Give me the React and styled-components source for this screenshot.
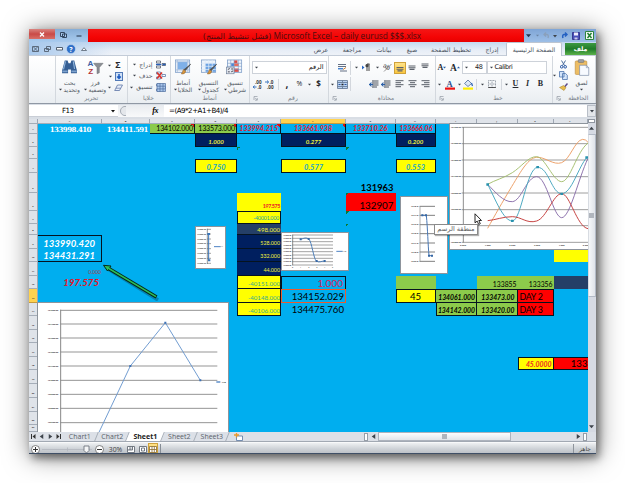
import React from 'react';
import styled, { createGlobalStyle, css } from 'styled-components';

const Global = createGlobalStyle`
  * { box-sizing: border-box; }
  body { margin: 0; background: #fff; overflow: hidden; }
`;

const ui = '"Open Sans", "DejaVu Sans", sans-serif';
const arabic = '"DejaVu Sans", "Noto Sans", sans-serif';

const Page = styled.div`
  width: 625px;
  height: 483px;
  padding: 29px;
  background: #fff;
  overflow: hidden;
`;

const Window = styled.main`
  width: 567px;
  height: 425px;
  display: flex;
  flex-direction: column;
  background: #d5dae2;
  box-shadow: 3px 4px 8px rgba(0, 0, 0, 0.45), 1px 2px 24px rgba(0, 0, 0, 0.5);
  border-bottom: 1px solid #3f4f66;
  font-family: ${ui};
  overflow: hidden;
`;

/* Title bar */
const TitleBar = styled.header`
  height: 13px;
  display: flex;
  flex: none;
  background: #a9c7ea;
`;
const WindowButtons = styled.div`
  width: 59px;
  display: flex;
  background: linear-gradient(#86add6, #a9cbee);
`;
const CloseButton = styled.div`
  width: 26px;
  height: 10px;
  display: flex;
  align-items: center;
  justify-content: center;
  background: linear-gradient(#d98480, #c94a47 50%, #d86f68);
`;
const WindowButton = styled.div`
  width: 16px;
  height: 11px;
  display: flex;
  align-items: center;
  justify-content: center;
`;
const Title = styled.h1`
  width: 436px;
  margin: 0;
  padding-left: 12px;
  background: linear-gradient(#f51616, #f40505 60%, #e80000);
  color: #4a0d10;
  font: 400 8.3px/14px ${ui};
  text-align: center;
  white-space: nowrap;
`;
const TitleArabic = styled.span`
  font: 400 7.9px/13px ${arabic};
`;
const QuickAccess = styled.div`
  width: 72px;
  display: flex;
  align-items: center;
  background: linear-gradient(#7fa5d6, #9dbfe7);
`;

/* Ribbon tabs */
const TabBar = styled.nav`
  height: 14px;
  flex: none;
  display: flex;
  background: linear-gradient(#c4d9f0, #e6edf6 60%, #eef2f8);
  border-bottom: 1px solid #c3ccd8;
`;
const TabTools = styled.div`
  width: 277px;
  flex: none;
  display: flex;
  align-items: center;
  background: linear-gradient(90deg, #a9c9ec, rgba(196, 217, 240, 0) 30%);
`;
const Tab = styled.div`
  width: ${p => p.$w}px;
  flex: none;
  height: 14px;
  font: 400 6.2px/15px ${arabic};
  color: #4a525e;
  text-align: center;
  white-space: nowrap;
  direction: rtl;
  ${p => p.$active && css`
    background: #fff;
    border: 1px solid #bcc5d1;
    border-bottom: 0;
    border-radius: 2px 2px 0 0;
    line-height: 13px;
  `}
  ${p => p.$file && css`
    margin: 1px 0 0 3px;
    height: 12px;
    line-height: 12px;
    color: #fff;
    font-weight: 700;
    background: linear-gradient(#3d9a42, #1f7b2a 50%, #5cb249);
  `}
`;

/* Ribbon */
const Ribbon = styled.section`
  height: 48px;
  flex: none;
  display: flex;
  background: linear-gradient(#fff, #f5f7f9 60%, #e9edf1);
  border-bottom: 1px solid #8f98a4;
`;
const Group = styled.div`
  width: ${p => p.$w}px;
  height: 47px;
  display: flex;
  flex-direction: column;
  border-right: 1px solid #d3d8de;
`;
const GroupBody = styled.div`
  height: 37px;
  display: flex;
  flex-direction: ${p => (p.$rows ? 'column' : 'row')};
  padding-top: 3px;
`;
const GroupLabel = styled.div`
  height: 10px;
  display: flex;
  align-items: center;
  justify-content: center;
  gap: 4px;
  font: 400 6px/10px ${arabic};
  color: #767d88;
  white-space: nowrap;
  padding: 0 3px;
`;
const LabelText = styled.span`
  flex: 1;
  text-align: center;
`;
const ToolRow = styled.div`
  height: ${p => p.$h || 16}px;
  display: flex;
  align-items: center;
`;
const Slot = styled.div`
  width: ${p => p.$w}px;
  height: 12px;
  flex: none;
  display: flex;
  align-items: center;
  justify-content: center;
  font: ${p => (p.$italic ? 'italic' : 'normal')} ${p => (p.$bold ? 700 : 400)} ${p => p.$size || 8}px/12px ${p => (p.$serif ? '"Liberation Serif", serif' : ui)};
  text-decoration: ${p => (p.$underline ? 'underline' : 'none')};
  color: #26292e;
  background: ${p => (p.$on ? 'linear-gradient(#ffe38a, #fbc73e)' : 'none')};
  border: ${p => (p.$on ? '1px solid #d0a23c' : '0')};
`;
const Combo = styled.div`
  width: ${p => p.$w}px;
  height: 12.5px;
  flex: none;
  display: flex;
  align-items: center;
  gap: 2px;
  padding: 0 2px;
  background: #fff;
  border: 1px solid #cdd2d9;
  font: 400 6.5px/11px ${arabic};
  color: #222;
`;
const ComboValue = styled.span`
  flex: ${p => (p.$end ? 1 : 'none')};
  padding-right: ${p => p.$inset || 0}px;
  text-align: right;
  letter-spacing: ${p => (p.$tight ? -0.4 : 0)}px;
`;
const BigButton = styled.div`
  width: ${p => p.$w}px;
  display: flex;
  flex-direction: column;
  align-items: center;
  font: 400 6px/7px ${arabic};
  color: #535a64;
  white-space: nowrap;
  text-align: center;
`;
const ButtonLine = styled.span`
  height: 7px;
  display: flex;
  align-items: center;
  gap: 1px;
`;
const SmallColumn = styled.div`
  flex: 1;
  display: flex;
  flex-direction: column;
`;
const SmallButton = styled.div`
  height: 12px;
  display: flex;
  align-items: center;
  justify-content: flex-end;
  gap: 3px;
  padding-right: ${p => p.$end || 4}px;
  font: 400 6.2px/10px ${arabic};
  color: #4d545e;
`;

/* Formula bar */
const FormulaBar = styled.div`
  height: 15px;
  flex: none;
  display: flex;
  align-items: center;
  padding: 1px 0 2px;
  background: #d9dee5;
  font: 400 7.1px/12px "DejaVu Sans", sans-serif;
  letter-spacing: -0.5px;
  color: #000;
`;
const NameBox = styled.div`
  width: 89px;
  height: 12px;
  display: flex;
  align-items: center;
  justify-content: space-between;
  padding: 0 3px 0 33px;
  background: #fff;
  border-bottom: 1px solid #c9ced6;
`;
const FormulaTools = styled.div`
  width: 46px;
  height: 12px;
  display: flex;
  align-items: center;
  justify-content: space-between;
  padding: 0 6px 0 0;
  background: linear-gradient(#e9ecf0, #f8f9fa);
  font: italic 700 8px/12px "Liberation Serif", serif;
`;
const FormulaInput = styled.div`
  flex: 1;
  height: 12px;
  padding-left: 5px;
  background: #fff;
`;
const FormulaExpand = styled.div`
  width: 9px;
  height: 12px;
  display: flex;
  align-items: center;
  justify-content: center;
  background: #e3e6ea;
  border: 1px solid #b9bfc8;
`;

/* Sheet */
const SheetArea = styled.div`
  height: 313px;
  flex: none;
  display: flex;
  overflow: hidden;
`;
const Sheet = styled.div`
  position: relative;
  width: 558.5px;
  height: 313px;
  display: grid;
  grid-template-columns: 9px 64px 48px 45px 42px 44px 65px 49.5px 40px 41.5px 40.5px 36px 34px;
  grid-template-rows: 5px 10px 13px 12px 14px 20px 18px 13px 11px 14px 13px 13.5px 13.5px 13.5px 13.5px 13.5px 13.5px 14px 13px 14px 14px 14px 13px 7px;
  background: #00aeef;
  overflow: hidden;
`;
const Header = styled.div`
  grid-row: ${p => p.$row};
  grid-column: ${p => p.$col};
  display: flex;
  align-items: ${p => (p.$row === 1 ? 'center' : 'flex-end')};
  justify-content: center;
  padding-bottom: ${p => (p.$row === 1 ? 0 : 2)}px;
  background: ${p => (p.$on ? '#ffd24f' : '#dfe3e9')};
  border-right: 1px solid #9fa7b3;
  border-bottom: 1px solid ${p => (p.$on ? '#c79a3a' : '#a5adb8')};
  font: 700 2.4px/4px ${ui};
  color: #333;
`;
const sides = { t: 'top', r: 'right', b: 'bottom', l: 'left' };
const Cell = styled.div`
  position: relative;
  grid-row: ${p => p.$row};
  grid-column: ${p => p.$col};
  min-width: 0;
  display: flex;
  align-items: flex-end;
  justify-content: ${p => p.$align || 'flex-end'};
  padding: 0 ${p => (p.$pad === undefined ? 2 : p.$pad)}px;
  white-space: nowrap;
  background: ${p => p.$bg || 'transparent'};
  color: ${p => p.$color || '#000'};
  font: ${p => (p.$italic ? 'italic' : 'normal')} ${p => (p.$bold ? 700 : 400)} ${p => p.$size || 10}px/${p => p.$lh || 11}px ${p => (p.$serif ? '"DejaVu Serif", serif' : 'Lato, sans-serif')};
  letter-spacing: ${p => p.$ls || 0}px;
  ${p => (p.$edge || '').split('').map(s => `border-${sides[s]}: 1px solid ${p.$edgeColor || '#05131f'};`).join('')}
`;
const Flag = styled.i`
  position: absolute;
  top: 0;
  ${p => (p.$right ? 'right: 0' : 'left: 0')};
  width: 3px;
  height: 3px;
  background: ${p => (p.$right ? 'linear-gradient(45deg, transparent 50%, #e01010 50%)' : 'linear-gradient(135deg, #0a7a33 50%, transparent 50%)')};
`;
const Floating = styled.div`
  position: absolute;
  left: ${p => p.$x}px;
  top: ${p => p.$y}px;
  width: ${p => p.$w}px;
  height: ${p => p.$h}px;
  background: ${p => (p.$clear ? 'none' : '#fff')};
  outline: ${p => (p.$clear ? '0' : '0.5px solid #8d949c')};
  svg { display: block; }
`;
const Tooltip = styled.div`
  position: absolute;
  left: 405px;
  top: 105px;
  width: 44px;
  height: 10.5px;
  background: #fff;
  border: 1px solid #8a8a8a;
  box-shadow: 1px 1px 1px rgba(0, 0, 0, 0.3);
  font: 400 6.6px/8px ${arabic};
  color: #606060;
  text-align: center;
  white-space: nowrap;
`;

/* Scroll bars, sheet tabs and status bar */
const VerticalScroll = styled.div`
  width: 8.5px;
  height: 313px;
  display: flex;
  flex-direction: column;
  align-items: center;
  background: #d6dae3;
`;
const SplitHandle = styled.div`
  width: 7px;
  height: 4px;
  border: 1px solid #8f96a0;
  background: #fff;
`;
const ScrollButton = styled.div`
  width: 8px;
  height: 11px;
  display: flex;
  align-items: center;
  justify-content: center;
`;
const VerticalThumb = styled.div`
  width: 8px;
  height: 163px;
  display: flex;
  align-items: center;
  justify-content: center;
  background: linear-gradient(90deg, #f6f7f9, #dfe3e9);
  border: 1px solid #b3bac6;
  border-left-color: #d8dce2;
`;
const Grip = styled.div`
  width: 5px;
  height: 5px;
  background: #b0b5bd;
`;
const ScrollFill = styled.div`
  flex: 1;
`;
const TabStrip = styled.div`
  height: 10px;
  flex: none;
  display: flex;
  background: #dce0e7;
  border-bottom: 1px solid #a2a9b3;
  font: 400 7px/10px ${ui};
  color: #5a6069;
`;
const SheetNav = styled.div`
  width: 34px;
  display: flex;
  align-items: center;
  justify-content: space-around;
`;
const SheetTab = styled.div`
  width: ${p => p.$w}px;
  padding-left: 1px;
  text-align: center;
  border-right: 1px solid #a7aeb8;
  transform: skewX(-22deg);
  ${p => p.$active && css`
    background: #fff;
    color: #222;
    font-weight: 700;
  `}
`;
const Unskew = styled.span`
  display: block;
  transform: skewX(22deg);
`;
const NewSheet = styled.div`
  width: 20px;
  display: flex;
  align-items: center;
  justify-content: center;
`;
const HorizontalScroll = styled.div`
  width: 223px;
  margin-left: auto;
  margin-right: 9px;
  display: flex;
  align-items: center;
`;
const EndHandle = styled.div`
  width: 4px;
  height: 8px;
  background: #fff;
  border: 1px solid #979ea8;
`;
const HorizontalThumb = styled.div`
  width: 133px;
  height: 9px;
  display: flex;
  align-items: center;
  justify-content: center;
  background: linear-gradient(#fdfdfe, #e2e5ea);
  border: 1px solid #adb3bd;
`;
const HGap = styled.div`
  width: ${p => p.$w}px;
  display: flex;
  align-items: center;
  justify-content: center;
`;
const StatusBar = styled.footer`
  flex: 1;
  display: flex;
  align-items: center;
  background: linear-gradient(#eef0f2, #cdd1d6 50%, #b5bac1);
  border-top: 1px solid #f8f9fa;
  font: 400 6.8px/11px ${ui};
  color: #444;
`;
const Slider = styled.div`
  width: 50px;
  height: 8px;
  display: flex;
  align-items: center;
`;
const Ready = styled.div`
  width: 23px;
  margin-left: auto;
  border-left: 1px solid #8e949c;
  font: 400 6px/10px ${arabic};
  text-align: center;
`;
const Divider = styled.div`
  width: 1px;
  height: ${p => p.$h || 11}px;
  flex: none;
  background: ${p => p.$dark ? '#868d96' : '#d3d7dd'};
`;

/* Icons */
const Arrow = ({ c = '#3d434b', dir = 'down', s = 4 }) => {
  const d = { down: 'M0 1h4L2 3.4z', up: 'M0 3h4L2 .6z', left: 'M3.4 0v4L.6 2z', right: 'M.6 0v4L3.4 2z' }[dir];
  return <svg width={s} height={s} viewBox="0 0 4 4"><path d={d} fill={c} /></svg>;
};
const Launcher = () => (
  <svg width="5" height="5" viewBox="0 0 5 5" fill="none" stroke="#9299a3" strokeWidth=".7"><path d="M1 4V.5h3.5M2 1.8l2.2 2.2M4.3 2v2.2H2" /></svg>
);
const Lines = ({ align = 'right' }) => (
  <svg width="9" height="8" viewBox="0 0 9 8" stroke="#555c66" strokeWidth="1">
    <path d="M.5 .7h8M.5 4.7h8" />
    <path d={align === 'right' ? 'M3 2.7h5.5M3 6.7h5.5' : align === 'left' ? 'M.5 2.7H6M.5 6.7H6' : 'M2 2.7h5M2 6.7h5'} />
  </svg>
);
const VAlign = ({ y }) => (
  <svg width="8" height="10" viewBox="0 0 8 10"><path d={`M.5 ${y}h7M.5 ${y + 1.7}h7M1.5 ${y + 3.4}h5`} stroke="#5d636c" strokeWidth="1.1" /></svg>
);
const Indent = () => (
  <svg width="10" height="9" viewBox="0 0 10 9" strokeWidth="1.1"><path d="M5 1h4.5M5 3h4.5M5 5h4.5M5 7h3M4 0v8" stroke="#4c535d" /><path d="M0 4.5h4M2.5 2.7l-2 1.8 2 1.8" fill="none" stroke="#2a5fa8" /></svg>
);
const Decimals = ({ flip }) => (
  <svg width="10" height="11" viewBox="0 0 10 11">
    <text x={flip ? 4.5 : 2} y="4.7" fontSize="4.6" fontWeight="700" fontFamily="Open Sans" fill="#333">{flip ? '.0' : '.00'}</text>
    <text x={flip ? 2 : 4.5} y="10" fontSize="4.6" fontWeight="700" fontFamily="Open Sans" fill="#333">{flip ? '.00' : '.0'}</text>
    <path d={flip ? 'M0 3h3.5M2 1.500L3.600 3 2 4.500' : 'M0 8h3.500M1.600 6.500L.2 8l1.400 1.500'} stroke="#2969b8" strokeWidth=".9" fill="none" />
  </svg>
);
const TableIcon = ({ kind }) => (
  <svg width="18" height="17" viewBox="0 0 18 17">
    <rect x="1" y="1" width="15" height="13" fill="#eef4fb" stroke="#7c9cc7" strokeWidth=".8" />
    {kind === 'cells' && <><rect x="3.5" y="3" width="10" height="8" fill="#7fb0e8" /><path d="M3 1v13M14 1v13M1 3h15M1 11.5h15" stroke="#9bb4d6" strokeWidth=".7" /></>}
    {kind === 'table' && <><rect x="5" y="4.5" width="11" height="9" fill="#6da3e3" /><path d="M5 1v13M8.7 1v13M12.4 1v13M1 4.5h15M1 7.7h15M1 11h15" stroke="#dce8f7" strokeWidth=".8" /></>}
    {kind === 'cond' && <><rect x="8" y="1.5" width="3.5" height="3" fill="#dc4b43" /><rect x="5" y="4.5" width="3" height="3" fill="#4b86d6" /><rect x="8" y="4.5" width="5" height="3" fill="#f06a55" /><rect x="8" y="10" width="5" height="3.5" fill="#dc4b43" /><path d="M4.5 1v13M8 1v13M12.5 1v13M1 4.5h15M1 7.7h15M1 11h15" stroke="#7c9cc7" strokeWidth=".6" /><rect x="0" y="8.5" width="8" height="7" fill="#e4e9f0" stroke="#6e7f98" strokeWidth=".7" /><path d="M1.5 11l2-1M1.5 13.5h2M5 10.5h2M5 13.5l2-1" stroke="#334" strokeWidth=".9" /></>}
    {kind !== 'cond' && <path d="M17 5.5l-5.5 6.5-1.5-.8z" fill="#555" stroke="#444" strokeWidth=".7" />}
    {kind !== 'cond' && <path d="M9.5 11l2.5 2c-1 2.5-3 3-5 2.5 1.5-.8 1.5-3 2.5-4.5z" fill="#d9963c" stroke="#7b542a" strokeWidth=".5" />}
  </svg>
);
const Binoculars = () => (
  <svg width="17" height="16" viewBox="0 0 17 16"><path d="M3.5 1.5h3l1 3h2l1-3h3l1 4 1.800 6.5v3H10v-4H7v4H.7v-3L2.5 5.5z" fill="#365f94" /><path d="M4.3 2.5L2.2 11M12.5 2.5l1.3 8" stroke="#8fb4dc" strokeWidth="1.2" /><path d="M1 13h5.5M10.5 13H16" stroke="#7fa3cf" strokeWidth="2" /></svg>
);
const SortIcon = () => (
  <svg width="17" height="17" viewBox="0 0 17 17"><path d="M6.5 4.500h10l-4 4.500V14.500l-2.400 1V9z" fill="#8b8f94" stroke="#66696e" strokeWidth=".5" /><text x="0" y="7.5" fontSize="8.5" fontFamily="Liberation Sans" fontWeight="700" fill="#3c5fa6">A</text><text x="1" y="16" fontSize="8.5" fontFamily="Liberation Sans" fontWeight="700" fill="#b3353a">Z</text></svg>
);
const FillIcon = () => (
  <svg width="8" height="9" viewBox="0 0 8 9"><rect x=".5" y=".5" width="7" height="8" fill="#cfe0f6" stroke="#5279b6" /><path d="M4 2v4M2.2 4.5L4 6.5l1.8-2" stroke="#1f5dc2" strokeWidth="1.5" fill="none" /></svg>
);
const EraserIcon = () => (
  <svg width="9" height="8" viewBox="0 0 9 8"><path d="M3.5 1h5L5.5 6.5H.7z" fill="#e8eefa" stroke="#5c73a5" strokeWidth=".8" /><path d="M2 4.2h4.6" stroke="#5c73a5" strokeWidth=".7" /></svg>
);
const CellsIcon = ({ kind }) => (
  <svg width="10" height="9" viewBox="0 0 10 9">
    <path d="M.5 1h4v2h-4zM.5 6h4v2h-4zM6 3.5h3.5v2H6z" fill="#fff" stroke={kind === 'insert' ? '#555d6a' : '#5f7ba8'} strokeWidth=".8" />
    {kind === 'insert' && <path d="M0 4.5h5M6.5 4.5h3" stroke="#2a5fb8" strokeWidth="1.3" />}
    {kind === 'delete' && <path d="M1 1.5l5 6M6 1.5l-5 6" stroke="#d8332c" strokeWidth="1.5" />}
    {kind === 'format' && <path d="M1 .5h8.5v8H1zM1 3.2h8M1 5.9h8M4 .5v8M7 .5v8" fill="#a9c6ec" stroke="#4e6d9e" strokeWidth=".7" />}
  </svg>
);
const Clipboard = () => (
  <svg width="16" height="18" viewBox="0 0 16 18"><rect x="1" y="2" width="12" height="14" rx="1" fill="#edbd64" stroke="#b98937" strokeWidth=".6" /><rect x="4" y=".6" width="6" height="3" rx="1" fill="#9c9ea3" stroke="#666" strokeWidth=".5" /><path d="M5.5 6.5h7l2.5 2.5v8H5.5z" fill="#f7faff" stroke="#7b8ba5" strokeWidth=".7" /><path d="M12.5 6.5V9H15" fill="none" stroke="#7b8ba5" strokeWidth=".6" /></svg>
);
const Scissors = () => (
  <svg width="7" height="9" viewBox="0 0 7 9" fill="none"><path d="M1.5.5l3 5M5.5.5l-3 5" stroke="#4d6f9e" /><circle cx="1.7" cy="6.8" r="1.3" stroke="#2455a4" /><circle cx="5.2" cy="6.8" r="1.3" stroke="#2455a4" /></svg>
);
const CopyIcon = () => (
  <svg width="9" height="9" viewBox="0 0 9 9" fill="#d3e4fa" stroke="#4d73ad" strokeWidth=".8"><path d="M.5.5h4.5v5.5H.5zM3.5 2.5h3l1.8 1.7v4.3H3.5z" /></svg>
);
const BrushIcon = () => (
  <svg width="9" height="8" viewBox="0 0 9 8"><path d="M8.5.5L5.5 4" stroke="#5c4a8a" strokeWidth="1.5" /><path d="M4.5 2.5l2.5 2-2 3L.5 4.5z" fill="#e8bc4c" stroke="#a07c28" strokeWidth=".5" /></svg>
);
const LetterBar = ({ bucket }) => (
  <svg width="10" height="11" viewBox="0 0 10 11">
    {bucket ? <><path d="M1.5 4.5L5 1l3.5 3.5L5 7.5z" fill="#dce7f5" stroke="#4b6b9b" strokeWidth=".8" /><path d="M8.5 4l1 3" stroke="#2860b5" strokeWidth="1.2" /></> : <text x="1.5" y="7.5" fontSize="8.5" fontWeight="700" fontFamily="Liberation Serif" fill="#2e4f8a">A</text>}
    <rect x="0" y="8.5" width="10" height="2.2" fill={bucket ? '#ffee00' : '#ed1111'} />
  </svg>
);
const BorderIcon = () => (
  <svg width="8" height="8" viewBox="0 0 8 8" fill="none" stroke="#8a929d" strokeWidth=".8"><path d="M.5.5h7v7h-7zM4 .5v7M.5 4h7" strokeDasharray="1 .5" /><path d="M.2 7.5h7.6" stroke="#333" /></svg>
);
const WrapIcon = () => (
  <svg width="11" height="10" viewBox="0 0 11 10"><path d="M1 1.5h8M1 3.5h8M3 8h7" stroke="#657184" strokeWidth="1.2" /><path d="M1 5.7h5" stroke="#4684d2" strokeWidth="1.5" /><path d="M6 6.5l3-2" stroke="#cf8335" /></svg>
);
const MergeIcon = () => (
  <svg width="11" height="9" viewBox="0 0 11 9"><path d="M.5.5h10v8H.5zM.5 2.5h10M.5 6.5h10M5.5.5v2M5.5 6.5v2" fill="#b9d2f1" stroke="#60738f" strokeWidth=".8" /><path d="M1.5 4.5h2M9.5 4.5h-2" stroke="#2a55a0" /><path d="M4.5 4.5h2" stroke="#222" strokeWidth="1.5" /></svg>
);
const OrientIcon = () => (
  <svg width="9" height="9" viewBox="0 0 9 9"><text x="0" y="6" fontSize="6.5" fontFamily="Liberation Sans" fill="#333" transform="rotate(25 4 4)">ab</text><path d="M1 8.5L8.5 1" stroke="#777" strokeWidth=".8" /></svg>
);
const ParaIcon = () => (
  <svg width="8" height="9" viewBox="0 0 8 9"><path d="M7.5 1H5v7M7 1v7" stroke="#444" fill="none" /><path d="M0 2.5v4l2.5-2z" fill="#2465c4" /><circle cx="5" cy="2.7" r="1.6" fill="#444" /></svg>
);

/* Charts */
const Ticks = ({ ys, x, size = 4, labels }) => ys.map((y, i) => (
  <text key={y} x={x} y={y + size / 3} fontSize={size} fontFamily="Open Sans" fontWeight="700" textAnchor="end" fill="#333">{labels ? labels[i] : '134000.00'}</text>
));
const PeakChart = () => {
  const ys = [30, 71, 113, 155, 197, 240, 282, 324, 367];
  return (
    <svg width="191" height="130" viewBox="53 8 573 390">
      <path d={ys.map(y => `M120 ${y}H591`).join('')} stroke="#8d8d8d" strokeWidth="2.8" />
      <path d="M121 28V400" stroke="#888" strokeWidth="3" />
      <Ticks ys={ys} x={114} size={6.5} labels={['134500.00', '134400.00', '134300.00', '134200.00', '134100.00', '134000.00', '133900.00', '133800.00', '133700.00']} />
      <path d="M235 398L330 197 435 67 540 240" fill="none" stroke="#6796ce" strokeWidth="2.8" />
      <path d="M327 194h6v6h-6zM432 64h6v6h-6zM537 237h6v6h-6z" fill="#3f72b5" />
      <path d="M588 245h12" stroke="#4c82c4" strokeWidth="4" /><text x="604" y="248" fontSize="7" fontWeight="700" fontFamily="Open Sans" fill="#333">A18</text>
    </svg>
  );
};
const BarChartSmall = () => {
  const ys = [57, 71, 86, 100, 115, 129, 144, 159];
  return (
    <svg width="29" height="41" viewBox="528 50 87 123">
      <path d={ys.map(y => `M561 ${y}h12`).join('')} stroke="#777" strokeWidth="2" />
      <path d="M562 55v106" stroke="#666" strokeWidth="2" />
      <Ticks ys={ys} x={558} size={5.5} />
      <path d="M566 70v80" stroke="#3975b9" strokeWidth="3" /><path d="M562 68h8v6h-8zM564 147h7v6h-7z" fill="#3975b9" />
      <path d="M582 109h20" stroke="#4c82c4" strokeWidth="3" /><text x="602" y="111" fontSize="6" fontFamily="Open Sans">A1</text>
    </svg>
  );
};
const StepChart = () => {
  const ys = [73, 83, 93, 103, 113, 123, 133, 143, 153, 163];
  return (
    <svg width="67" height="37" viewBox="245 67 201 111">
      <path d={ys.map(y => `M276 ${y}H398`).join('')} stroke="#777" strokeWidth="2" />
      <path d="M277 72v92" stroke="#555" strokeWidth="2" />
      <Ticks ys={ys} x={273} size={5} />
      <path d="M301 86C310 83 318 79 326 86S340 145 348 151S363 151 373 151" fill="none" stroke="#4d7eb8" strokeWidth="3" />
      <path d="M298 83h6v6h-6zM322 82h6v6h-6zM346 148h6v6h-6zM370 148h6v6h-6z" fill="#3768a5" />
      {[277, 301, 326, 350, 373, 397].map((x, i) => <text key={x} x={x - 2} y="173" fontSize="6" fontFamily="Open Sans">{i}</text>)}
      <path d="M408 122h19" stroke="#4c82c4" strokeWidth="3" /><text x="427" y="124" fontSize="6" fontFamily="Open Sans">A13</text>
    </svg>
  );
};
const DropChart = () => {
  const ys = [273, 300, 328, 355, 383, 410, 438];
  return (
    <svg width="46" height="76" viewBox="32 245 138 228">
      <path d={ys.map(y => `M88 ${y}H134`).join('')} stroke="#666" strokeWidth="2.5" />
      <path d="M89 272V440" stroke="#888" strokeWidth="2" />
      <Ticks ys={ys} x={84} size={7} labels={['1345.0', '1344.0', '1343.0', '1342.0', '1341.0', '1340.0', '1339.0']} />
      <path d="M94 300h14C112 340 113 390 116 421h11" fill="none" stroke="#4978b5" strokeWidth="3" />
      <path d="M93 297h6v6h-6zM104 297h6v6h-6zM113 418h6v6h-6zM122 418h6v6h-6z" fill="#3768a5" />
      <path d="M142 356h14" stroke="#4c82c4" strokeWidth="3" />
    </svg>
  );
};
const CurvesChart = () => {
  const ys = [37, 86, 135, 185, 234, 284, 332, 382];
  return (
    <svg width="138" height="125" viewBox="180 27 414 375">
      <path d={ys.map(y => `M215 ${y}H594`).join('')} stroke="#858585" strokeWidth="2.4" />
      <path d="M220 36V383" stroke="#777" strokeWidth="2.5" />
      <Ticks ys={ys} x={213} size={6.3} labels={['134700.00', '134500.00', '134300.00', '134100.00', '133900.00', '133700.00', '133500.00', '133300.00']} />
      {[219, 293, 367, 441, 515, 587].map((x, i) => <text key={x} x={x} y="394" fontSize="7" fontWeight="700" textAnchor="middle" fontFamily="Open Sans" fill="#444">{i}.000</text>)}
      <g fill="none" strokeWidth="2.8">
        <path d="M293 340C315 300 335 265 365 215C395 165 415 129 440 127S490 152 515 143S555 75 578 73Q588 73 594 82" stroke="#ec9c62" />
        <path d="M293 208C315 195 340 190 367 173S415 124 440 125S490 200 515 200S560 110 594 84" stroke="#a3bd6b" />
        <path d="M293 208C315 230 340 262 367 260S410 185 440 185S490 308 515 308S565 190 594 130" stroke="#866ba8" />
        <path d="M293 208C315 250 340 318 367 318S410 157 443 157S485 236 515 236S565 155 591 127" stroke="#42a4bd" />
        <path d="M293 317C315 315 340 305 367 305S410 327 440 318S490 236 515 236C540 236 560 335 594 341" stroke="#c33736" />
      </g>
      <path d="M289 205h8v7h-8zM363 314h8v7h-8zM439 153h8v7h-8zM511 233h8v7h-8zM586 124h8v7h-8z" fill="#2992ae" />
    </svg>
  );
};

const BLUE = '#00aeef';
const GREEN = '#8ccb4b';
const topText = { r: 1, color: '#f0142f', bold: 1, italic: 1, size: 7.1, lh: 9, bg: BLUE, edge: 'rb' };
const cells = [
  { r: 1, c: 1, t: '133998.410', color: '#fff', bold: 1, serif: 1, size: 7, lh: 9, pad: 11, ls: -0.5 },
  { r: 1, c: 2, t: '134411.591', color: '#fff', bold: 1, serif: 1, size: 7, lh: 9, pad: 2, ls: -0.5 },
  { r: 1, c: 3, t: '134102.000', bg: GREEN, size: 7, lh: 9, pad: 1, edge: 'rb', flag: 'r', ls: -0.15 },
  { r: 1, c: 4, t: '133573.000', bg: GREEN, size: 7, lh: 9, pad: 1, edge: 'rb', flag: 'r', ls: -0.15 },
  { ...topText, c: 5, t: '133994.215', pad: 2, flag: 'r' },
  { ...topText, c: 6, t: '133661.938', align: 'center', flag: 'r' },
  { ...topText, c: 7, t: '133710.26', align: 'center' },
  { ...topText, c: 8, t: '133666.06', pad: 2 },
  ...[[4, '1.000'], [6, '0.277'], [8, '0.200']].map(([c, t]) => ({ r: 2, c, t, bg: '#001f5f', color: '#f4f43c', bold: 1, italic: 1, size: 6.1, lh: 9, align: 'center', edge: 'lrb' })),
  ...[[4, '0.750'], [6, '0.577'], [8, '0.553']].map(([c, t]) => ({ r: 4, c, t, bg: '#ffff00', color: '#18a5c9', bold: 1, italic: 1, size: 7.4, lh: 9, align: 'center', edge: 'tlrb' })),
  { r: 3, c: 5, flag: 'l' }, { r: 3, c: 7, flag: 'l' },
  { r: 5, c: 7, t: '131963', bold: 1, size: 9.4, lh: 11 },
  { r: 6, c: 7, t: '132907', size: 9.8, lh: 12, bg: '#ff0000', flag: 'l' },
  { r: 7, c: 7, flag: 'l' }, { r: 8, c: 7, flag: 'l' },
  { r: 6, c: 5, t: '197.575', bg: '#ffff00', color: '#ee1c24', size: 5.4, lh: 9, pad: 1, bold: 1, ls: -0.4 },
  { r: 7, c: 5, t: '-40001.000', bg: '#ffff00', color: '#1fa5a5', size: 5.4, lh: 9, pad: 1, edge: 'tlrb', ls: -0.25 },
  { r: 8, c: 5, t: '498.000', bg: '#243f67', color: '#f4f43c', size: 6.1, lh: 9, pad: 1, edge: 'b' },
  { r: 9, c: 5, t: '528.000', bg: '#001f5f', color: '#f4f43c', size: 5.3, lh: 9, pad: 1, edge: 'b' },
  { r: 10, c: 5, t: '332.000', bg: '#001f5f', color: '#f4f43c', size: 5.3, lh: 9, pad: 1, edge: 'b' },
  { r: 11, c: 5, t: '44.000', bg: '#001f5f', color: '#f4f43c', size: 5.3, lh: 9, pad: 1, edge: 'b' },
  ...[[12, '-40151.000'], [13, '-40148.000'], [14, '-40106.000']].map(([r, t]) => ({ r, c: 5, t, bg: '#ffff00', color: '#3aaa94', size: 6.1, lh: 9, pad: 0, edge: 'lrb' })),
  { r: 12, c: 6, t: '1.000', color: '#d61f5c', size: 10, lh: 11, edge: 'tlr', pad: 2 },
  { r: 13, c: 6, t: '134152.029', size: 9.6, lh: 11, edge: 'tlrb', edgeColor: '#ee5a2c', pad: 1 },
  { r: 14, c: 6, t: '134475.760', size: 9.6, lh: 12, pad: 2 },
  { r: 12, c: 8, bg: GREEN },
  { r: 13, c: 8, t: '45', bg: '#ffff00', align: 'center', size: 9.6, edge: 'tlrb' },
  { r: 13, c: 9, t: '134061.000', bg: GREEN, bold: 1, italic: 1, size: 6.8, lh: 9, pad: 1, edge: 'trb' },
  { r: 14, c: 9, t: '134142.000', bg: GREEN, bold: 1, italic: 1, size: 6.8, lh: 9, pad: 1, edge: 'lrb' },
  { r: 12, c: 10, t: '133855', bg: GREEN, size: 6.8, lh: 9, pad: 1 },
  { r: 12, c: 11, t: '133356', bg: GREEN, size: 6.8, lh: 9, pad: 1 },
  { r: 12, c: 12, bg: '#243f67' },
  { r: 13, c: 10, t: '133473.00', bg: GREEN, bold: 1, italic: 1, size: 6.8, lh: 9, edge: 'trb' },
  { r: 14, c: 10, t: '133420.00', bg: GREEN, bold: 1, italic: 1, size: 6.8, lh: 9, edge: 'rb' },
  { r: 13, c: 11, t: 'DAY 2', bg: '#ff0000', size: 8.8, lh: 11, align: 'flex-start', edge: 'trb', ls: -0.25 },
  { r: 14, c: 11, t: 'DAY 3', bg: '#ff0000', size: 8.8, lh: 11, align: 'flex-start', edge: 'rb', ls: -0.25 },
  { r: 10, c: 12, bg: '#ffff00' },
  { r: 18, c: 11, t: '45.0000', bg: '#ffff00', color: '#ee1c24', bold: 1, italic: 1, size: 6.9, lh: 9, edge: 'tlrb', pad: 1 },
  { r: 18, c: 12, t: '133', bg: '#ff0000', size: 9.6, lh: 11, edge: 'tb', pad: 0 },
  { r: '9 / 11', c: 1, edge: 'trb' },
  { r: 9, c: 1, t: '133990.420', color: '#fff', bold: 1, italic: 1, size: 9.5, lh: 11, pad: 7 },
  { r: 10, c: 1, t: '134431.291', color: '#fff', bold: 1, italic: 1, size: 9.5, lh: 12, pad: 7 },
  { r: 11, c: 1, t: '0.000', color: '#b03a48', size: 5, lh: 8, pad: 1 },
  { r: 12, c: 1, t: '197.575', color: '#e81225', bold: 1, italic: 1, size: 9.6, lh: 12, pad: 3 },
];

const shift = r => (typeof r === 'number' ? r + 1 : r.split('/').map(n => Number(n) + 1).join(' / '));

export default function App() {
  return (
    <Page>
      <Global />
      <Window>
        <TitleBar>
          <WindowButtons>
            <CloseButton><svg width="6" height="5" viewBox="0 0 6 5"><path d="M1 .5l4 4M5 .5l-4 4" stroke="#fff" strokeWidth="1.3" /></svg></CloseButton>
            <WindowButton><svg width="7" height="6" viewBox="0 0 7 6" fill="#a9c9ec" stroke="#33465f"><path d="M.5.5h4v4h-4zM2.5 2h4v3.5h-4z" /></svg></WindowButton>
            <WindowButton><svg width="6" height="6" viewBox="0 0 6 6"><path d="M.5 4h5" stroke="#33465f" strokeWidth="1.2" /></svg></WindowButton>
          </WindowButtons>
          <Title><TitleArabic>(فشل تنشيط المنتج)</TitleArabic> Microsoft Excel – daily eurusd $$$.xlsx</Title>
          <QuickAccess>
            <Slot $w={9}><Arrow s={5} c="#24364f" /></Slot>
            <Slot $w={9}><Arrow s={3} c="#6b84a4" /></Slot>
            <Slot $w={9}><svg width="7" height="7" viewBox="0 0 7 7"><path d="M1 2.5h3Q6 3 5 6M3 .5l-2 2 2 2" fill="none" stroke="#8aa0bb" strokeWidth="1.3" /></svg></Slot>
            <Slot $w={8}><Arrow /></Slot>
            <Slot $w={10}><svg width="7" height="7" viewBox="0 0 7 7"><path d="M6 2.5H3Q1 3 2 6M4 .5l2 2-2 2" fill="none" stroke="#2461c2" strokeWidth="1.5" /></svg></Slot>
            <Slot $w={14}><svg width="8" height="8" viewBox="0 0 8 8"><path d="M.5.5h7v7h-7z" fill="#4a51b8" stroke="#363a91" /><path d="M2 .5h4v3H2z" fill="#eef" /><path d="M2.5 5.5h3v2h-3z" fill="#cce" /></svg></Slot>
            <Slot $w={12}><svg width="9" height="9" viewBox="0 0 9 9"><path d="M.5.5h8v8h-8z" fill="#f3faf3" stroke="#2e8441" /><path d="M2.5 2l4 5M6.5 2l-4 5" stroke="#238036" strokeWidth="1.5" /></svg></Slot>
          </QuickAccess>
        </TitleBar>

        <TabBar>
          <TabTools>
            <Slot $w={12}><svg width="7" height="6" viewBox="0 0 7 6" fill="none" stroke="#526070" strokeWidth=".9"><path d="M.5.5h6v5h-6zM1.5 1l4 4M5.5 1l-4 4" /></svg></Slot>
            <Slot $w={12}><svg width="7" height="6" viewBox="0 0 7 6" fill="none" stroke="#526070" strokeWidth=".9"><path d="M2.5.5h4v3h-4zM.5 2.5h4v3h-4z" /></svg></Slot>
            <Slot $w={12}><svg width="7" height="4" viewBox="0 0 7 4" fill="#fff" stroke="#526070"><path d="M.5.5h6v2.5h-6z" /></svg></Slot>
            <Slot $w={12}><svg width="10" height="10" viewBox="0 0 10 10"><circle cx="5" cy="5" r="4.5" fill="#2f70c8" stroke="#dce9f8" strokeWidth=".5" /><text x="5" y="7.5" fontSize="7" fontWeight="700" textAnchor="middle" fill="#fff" fontFamily="Open Sans">?</text></svg></Slot>
            <Slot $w={14}><svg width="6" height="4" viewBox="0 0 6 4"><path d="M.5 3.5L3 .7l2.5 2.8z" fill="#fff" stroke="#526070" strokeWidth=".8" /></svg></Slot>
          </TabTools>
          <Tab $w={30}>عرض</Tab>
          <Tab $w={32}>مراجعة</Tab>
          <Tab $w={32}>بيانات</Tab>
          <Tab $w={24}>صيغ</Tab>
          <Tab $w={54}>تخطيط الصفحة</Tab>
          <Tab $w={28}>إدراج</Tab>
          <Tab $w={56} $active>الصفحة الرئيسية</Tab>
          <Tab $w={31} $file>ملف</Tab>
        </TabBar>

        <Ribbon>
          <Group $w={27} />
          <Group $w={71.5}>
            <GroupBody>
              <BigButton $w={28}><Binoculars /><svg width="1" height="5" /><ButtonLine>بحث</ButtonLine><ButtonLine><Arrow s={3} />وتحديد</ButtonLine></BigButton>
              <BigButton $w={25}><SortIcon /><svg width="1" height="4" /><ButtonLine>فرز</ButtonLine><ButtonLine><Arrow s={3} />وتصفية</ButtonLine></BigButton>
              <SmallColumn>
                <SmallButton $end={4}><Arrow s={3} /><Slot $w={9} $bold $size={9}>Σ</Slot></SmallButton>
                <SmallButton $end={4}><Arrow s={3} /><FillIcon /></SmallButton>
                <SmallButton $end={4}><Arrow s={3} /><EraserIcon /></SmallButton>
              </SmallColumn>
            </GroupBody>
            <GroupLabel>تحرير</GroupLabel>
          </Group>
          <Group $w={43}>
            <GroupBody $rows>
              <SmallButton><Arrow s={3} />إدراج<CellsIcon kind="insert" /></SmallButton>
              <SmallButton><Arrow s={3} />حذف<CellsIcon kind="delete" /></SmallButton>
              <SmallButton><Arrow s={3} />تنسيق<CellsIcon kind="format" /></SmallButton>
            </GroupBody>
            <GroupLabel>خلايا</GroupLabel>
          </Group>
          <Group $w={79}>
            <GroupBody>
              <BigButton $w={25}><TableIcon kind="cells" /><svg width="1" height="4" /><ButtonLine>أنماط</ButtonLine><ButtonLine><Arrow s={3} />الخلايا</ButtonLine></BigButton>
              <BigButton $w={26}><TableIcon kind="table" /><svg width="1" height="4" /><ButtonLine>التنسيق</ButtonLine><ButtonLine><Arrow s={3} />كجدول</ButtonLine></BigButton>
              <BigButton $w={27}><TableIcon kind="cond" /><svg width="1" height="4" /><ButtonLine>تنسيق</ButtonLine><ButtonLine><Arrow s={3} />شرطي</ButtonLine></BigButton>
            </GroupBody>
            <GroupLabel>أنماط</GroupLabel>
          </Group>
          <Group $w={79}>
            <GroupBody $rows>
              <ToolRow $h={17}>
                <Slot $w={2} /><Combo $w={75}><Arrow s={3} /><ComboValue $end>الرقم</ComboValue></Combo>
              </ToolRow>
              <ToolRow>
                <Slot $w={2} /><Slot $w={13}><Decimals /></Slot><Slot $w={11}><Decimals flip /></Slot>
                <Slot $w={5}><Divider /></Slot>
                <Slot $w={13} $bold $size={10}>,</Slot><Slot $w={12} $size={7}>%</Slot><Slot $w={8}><Arrow s={3} /></Slot><Slot $w={10} $bold>$</Slot>
              </ToolRow>
            </GroupBody>
            <GroupLabel><Launcher /><LabelText>رقم</LabelText></GroupLabel>
          </Group>
          <Group $w={107}>
            <GroupBody $rows>
              <ToolRow $h={17}>
                <Slot $w={8} /><Slot $w={12}><WrapIcon /></Slot><Slot $w={4}><Divider $h={14} /></Slot>
                <Slot $w={7}><Arrow s={3} /></Slot><Slot $w={13}><ParaIcon /></Slot><Slot $w={9}><Arrow s={3} /></Slot><Slot $w={12}><OrientIcon /></Slot>
                <Slot $w={12} $on><VAlign y={4.5} /></Slot><Slot $w={13}><VAlign y={3} /></Slot><Slot $w={12}><VAlign y={1} /></Slot>
              </ToolRow>
              <ToolRow>
                <Slot $w={8}><Arrow s={3} /></Slot><Slot $w={12}><MergeIcon /></Slot><Slot $w={4}><Divider $h={14} /></Slot>
                <Slot $w={15} /><Slot $w={12}><Indent /></Slot><Slot $w={12}><Indent /></Slot>
                <Slot $w={15}><Lines align="left" /></Slot><Slot $w={12}><Lines align="center" /></Slot><Slot $w={13}><Lines /></Slot>
              </ToolRow>
            </GroupBody>
            <GroupLabel><Launcher /><LabelText>محاذاة</LabelText></GroupLabel>
          </Group>
          <Group $w={117}>
            <GroupBody $rows>
              <ToolRow $h={17}>
                <Slot $w={13} $serif $bold $size={8}>A<Arrow s={3} c="#2a5fa8" /></Slot>
                <Slot $w={13} $serif $bold $size={9.5}>A<Arrow s={3} dir="up" c="#2a5fa8" /></Slot>
                <Combo $w={25}><Arrow s={3} /><ComboValue $end $tight $inset={1}>48</ComboValue></Combo>
                <Combo $w={60}><Arrow s={3} /><ComboValue $tight>Calibri</ComboValue></Combo>
              </ToolRow>
              <ToolRow>
                <Slot $w={8}><Arrow s={3} /></Slot><Slot $w={12}><LetterBar /></Slot><Slot $w={7}><Arrow s={3} /></Slot><Slot $w={10}><LetterBar bucket /></Slot>
                <Slot $w={7}><Divider /></Slot><Slot $w={6}><Arrow s={3} /></Slot><Slot $w={13}><BorderIcon /></Slot><Slot $w={5}><Divider /></Slot>
                <Slot $w={6}><Arrow s={3} /></Slot><Slot $w={12} $serif $bold $underline>U</Slot><Slot $w={12} $serif $bold $italic>I</Slot><Slot $w={14} $serif $bold>B</Slot>
              </ToolRow>
            </GroupBody>
            <GroupLabel><Launcher /><LabelText>خط</LabelText></GroupLabel>
          </Group>
          <Group $w={43.5}>
            <GroupBody>
              <SmallColumn>
                <SmallButton $end={1}><Scissors /></SmallButton>
                <SmallButton $end={0.5}><Arrow s={3} /><CopyIcon /></SmallButton>
                <SmallButton $end={0.5}><BrushIcon /></SmallButton>
              </SmallColumn>
              <BigButton $w={27}><Clipboard /><svg width="1" height="3" /><ButtonLine>لصق</ButtonLine><ButtonLine><Arrow s={3} /></ButtonLine></BigButton>
            </GroupBody>
            <GroupLabel><Launcher /><LabelText>الحافظة</LabelText></GroupLabel>
          </Group>
        </Ribbon>

        <FormulaBar>
          <NameBox>F13<Arrow c="#111" /></NameBox>
          <FormulaTools>
            <svg width="10" height="10" viewBox="0 0 10 10"><path d="M8 .5a4.6 4.6 0 1 0 0 9" fill="#e4e7eb" stroke="#a8aeb7" /></svg>
            fx
          </FormulaTools>
          <FormulaInput>=(A9*2+A1+B4)/4</FormulaInput>
          <FormulaExpand><Arrow /></FormulaExpand>
        </FormulaBar>

        <SheetArea>
          <Sheet>
            {Array.from({ length: 13 }, (_, i) => <Header key={`c${i}`} $row={1} $col={i + 1} $on={i === 6}>{i ? 'ABCDEFGHIJKL'[i - 1] : ''}</Header>)}
            {Array.from({ length: 23 }, (_, i) => <Header key={`r${i}`} $row={i + 2} $col={1} $on={i === 12}>{i + 1}</Header>)}
            {cells.map((c, i) => (
              <Cell key={i} $row={shift(c.r)} $col={c.c + 1} $bg={c.bg} $color={c.color} $bold={c.bold} $italic={c.italic} $serif={c.serif} $size={c.size} $lh={c.lh} $align={c.align} $pad={c.pad} $edge={c.edge} $edgeColor={c.edgeColor} $ls={c.ls}>
                {c.t}
                {c.flag && <Flag $right={c.flag === 'r'} />}
              </Cell>
            ))}
            <Floating $x={9} $y={184} $w={190} $h={129}><PeakChart /></Floating>
            <Floating $x={167} $y={108} $w={28.5} $h={41}><BarChartSmall /></Floating>
            <Floating $x={252.5} $y={113.5} $w={66} $h={37}><StepChart /></Floating>
            <Floating $x={371.5} $y={77.5} $w={46} $h={76}><DropChart /></Floating>
            <Floating $x={421} $y={5} $w={138} $h={125}><CurvesChart /></Floating>
            <Floating $clear $x={73} $y={144} $w={60} $h={38}>
              <svg width="60" height="38" viewBox="0 0 60 38">
                <path d="M5 5L55 36" stroke="#075b7c" strokeWidth="3.5" opacity=".5" transform="translate(1 1)" />
                <path d="M5 4.5L54.5 34" stroke="#062915" strokeWidth="3.6" />
                <path d="M1.5 2.3l7.5.7-3.5 5z" fill="#2bbf5c" stroke="#062915" />
                <path d="M6 5L54 33.7" stroke="#2bbf5c" strokeWidth="1.5" />
              </svg>
            </Floating>
            <Tooltip>منطقة الرسم</Tooltip>
            <Floating $clear $x={445} $y={93.5} $w={9} $h={13}>
              <svg width="9" height="13" viewBox="0 0 9 13"><path d="M1 .8v9l2.2-1.7 1.5 3.4 1.6-.8L4.8 7.5H7.5z" fill="#fff" stroke="#111" strokeWidth=".9" /></svg>
            </Floating>
          </Sheet>
          <VerticalScroll>
            <SplitHandle />
            <ScrollButton><Arrow dir="up" s={5} /></ScrollButton>
            <VerticalThumb><Grip /></VerticalThumb>
            <ScrollFill />
            <ScrollButton><Arrow s={5} /></ScrollButton>
          </VerticalScroll>
        </SheetArea>

        <TabStrip>
          <SheetNav>
            <svg width="5" height="5" viewBox="0 0 5 5"><path d="M.5 0v5" stroke="#333" /><path d="M4.5 0v5L1.5 2.5z" fill="#333" /></svg>
            <Arrow dir="left" s={5} /><Arrow dir="right" s={5} />
            <svg width="5" height="5" viewBox="0 0 5 5"><path d="M4.5 0v5" stroke="#333" /><path d="M.5 0v5l3-2.5z" fill="#333" /></svg>
          </SheetNav>
          <SheetTab $w={34}><Unskew>Chart1</Unskew></SheetTab>
          <SheetTab $w={31}><Unskew>Chart2</Unskew></SheetTab>
          <SheetTab $w={35} $active><Unskew>Sheet1</Unskew></SheetTab>
          <SheetTab $w={33}><Unskew>Sheet2</Unskew></SheetTab>
          <SheetTab $w={32}><Unskew>Sheet3</Unskew></SheetTab>
          <NewSheet><svg width="9" height="8" viewBox="0 0 9 8"><path d="M2.5 3h6v4.5h-6z" fill="#fff" stroke="#56759f" strokeWidth=".8" /><path d="M0 2h5M2.5 0v4.5" stroke="#e99a2d" strokeWidth="1.3" /></svg></NewSheet>
          <HorizontalScroll>
            <EndHandle />
            <HGap $w={10}><Arrow dir="left" s={5} /></HGap>
            <HorizontalThumb><Grip /></HorizontalThumb>
            <HGap $w={62} />
            <HGap $w={10}><Arrow dir="right" s={5} /></HGap>
            <EndHandle />
          </HorizontalScroll>
        </TabStrip>

        <StatusBar>
          <HGap $w={13}><svg width="9" height="9" viewBox="0 0 9 9"><circle cx="4.5" cy="4.5" r="4" fill="#fff" stroke="#666" strokeWidth=".8" /><path d="M2 4.5h5M4.5 2v5" stroke="#333" /></svg></HGap>
          <Slider><svg width="50" height="9" viewBox="0 0 50 9"><path d="M0 4.5h50M25.5 2.5v4" stroke="#b3b8bf" strokeWidth=".8" /><path d="M42 1h5v4.5L44.5 8 42 5.5z" fill="#f4f5f6" stroke="#70777f" strokeWidth=".9" /></svg></Slider>
          <HGap $w={15}><svg width="9" height="9" viewBox="0 0 9 9"><circle cx="4.5" cy="4.5" r="4" fill="#fff" stroke="#666" strokeWidth=".8" /><path d="M2 4.5h5" stroke="#333" /></svg></HGap>
          <HGap $w={17}>30%</HGap>
          <HGap $w={14}><svg width="8" height="7" viewBox="0 0 8 7" fill="#fff" stroke="#666d76" strokeWidth=".9"><path d="M.5.5h7v6h-7zM.5 4h5V.5M3 .5V4" /></svg></HGap>
          <HGap $w={10}><svg width="8" height="7" viewBox="0 0 8 7" fill="#fff" stroke="#666d76" strokeWidth=".9"><path d="M.5.5h7v6h-7zM2.5 2h3v3h-3z" /></svg></HGap>
          <Slot $w={10} $on><svg width="8" height="7" viewBox="0 0 8 7" fill="#fff" stroke="#8a6c31" strokeWidth=".8"><path d="M.5.5h7v6h-7zM.5 3.5h7M3 .5v6M5.3.5v6" /></svg></Slot>
          <HGap $w={4}><Divider $dark $h={10} /></HGap>
          <Ready>جاهز</Ready>
        </StatusBar>
      </Window>
    </Page>
  );
}
